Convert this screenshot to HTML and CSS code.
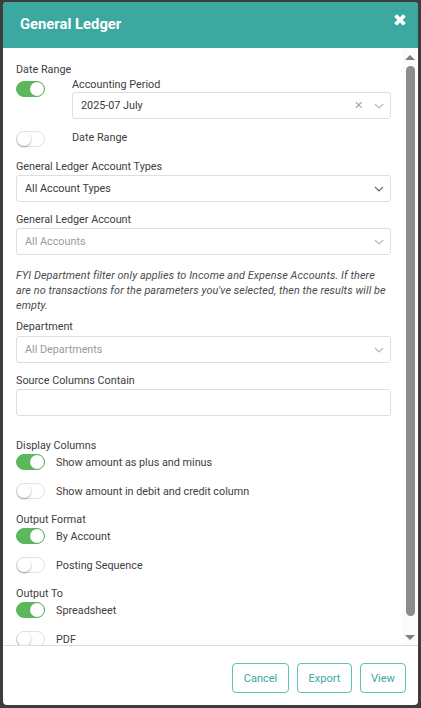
FILE: index.html
```html
<!DOCTYPE html>
<html>
<head>
<meta charset="utf-8">
<link rel="stylesheet" href="styles.css">
</head>
<body>
<div class="modal">
  <div class="header">
    <div class="title">General Ledger</div>
    <div class="close">&#x2715;</div>
  </div>
  <div class="main">
    <div class="content">
      <div class="label">Date Range</div>
      <div class="period-row">
        <span class="toggle on"></span>
        <div class="period-col">
          <div class="sublabel">Accounting Period</div>
          <div class="select">
            <span class="value">2025-07 July</span>
            <span class="clear">&#x2715;</span>
            <svg class="chev" viewBox="0 0 10 6" width="10" height="6"><path d="M1 1l4 4 4-4" fill="none" stroke="#b5b5b5" stroke-width="1.1"/></svg>
          </div>
        </div>
      </div>
      <div class="trow first"><span class="toggle"></span><span class="ttext">Date Range</span></div>

      <div class="label gap-a">General Ledger Account Types</div>
      <div class="select">
        <span class="value">All Account Types</span>
        <svg class="chev dark" viewBox="0 0 10 6" width="10" height="6"><path d="M1 1l4 4 4-4" fill="none" stroke="#666" stroke-width="1.1"/></svg>
      </div>

      <div class="label gap-b">General Ledger Account</div>
      <div class="select">
        <span class="value ph">All Accounts</span>
        <svg class="chev" viewBox="0 0 10 6" width="10" height="6"><path d="M1 1l4 4 4-4" fill="none" stroke="#b5b5b5" stroke-width="1.1"/></svg>
      </div>

      <p class="note">FYI Department filter only applies to Income and Expense Accounts. If there are no transactions for the parameters you've selected, then the results will be empty.</p>

      <div class="label gap-c">Department</div>
      <div class="select">
        <span class="value ph">All Departments</span>
        <svg class="chev" viewBox="0 0 10 6" width="10" height="6"><path d="M1 1l4 4 4-4" fill="none" stroke="#b5b5b5" stroke-width="1.1"/></svg>
      </div>

      <div class="label gap-b">Source Columns Contain</div>
      <div class="select input"></div>

      <div class="label gap-d">Display Columns</div>
      <div class="trow"><span class="toggle on"></span><span class="ttext">Show amount as plus and minus</span></div>
      <div class="trow next"><span class="toggle"></span><span class="ttext">Show amount in debit and credit column</span></div>

      <div class="label gap-e">Output Format</div>
      <div class="trow"><span class="toggle on"></span><span class="ttext">By Account</span></div>
      <div class="trow next"><span class="toggle"></span><span class="ttext">Posting Sequence</span></div>

      <div class="label gap-e">Output To</div>
      <div class="trow"><span class="toggle on"></span><span class="ttext">Spreadsheet</span></div>
      <div class="trow next"><span class="toggle"></span><span class="ttext">PDF</span></div>
    </div>
    <div class="scrollbar">
      <span class="arrow up"></span>
      <span class="thumb"></span>
      <span class="arrow down"></span>
    </div>
  </div>
  <div class="footer">
    <button class="btn cancel">Cancel</button>
    <button class="btn export">Export</button>
    <button class="btn view">View</button>
  </div>
</div>
</body>
</html>
```

FILE: styles.css
```css
* { box-sizing: border-box; }
html, body { margin: 0; padding: 0; }
body {
  background: #3d3d3d;
  width: 421px;
  height: 708px;
  overflow: hidden;
  font-family: Roboto, "Liberation Sans", sans-serif;
  font-size: 10.8px;
  color: #3f3f3f;
  padding: 2px 3px 3px 3px;
}
.modal {
  width: 415px;
  height: 703px;
  background: #fff;
  border-radius: 4px;
  overflow: hidden;
  display: flex;
  flex-direction: column;
}
.header {
  height: 46px;
  flex: none;
  background: #3ba99f;
  display: flex;
  align-items: center;
  justify-content: space-between;
  padding: 0 12px 2px 17px;
}
.title {
  font-family: Roboto, "Liberation Sans", sans-serif;
  font-weight: 700;
  font-size: 14.8px;
  color: #fff;
}
.close {
  color: #fff;
  font-weight: 900;
  font-size: 14px;
  margin-top: -8px;
  -webkit-text-stroke: 1.6px #fff;
}
.main {
  flex: none;
  height: 598px;
  display: flex;
  overflow: hidden;
  border-bottom: 1px solid #dcdcdc;
}
.content {
  flex: 1;
  padding: 13px 12px 0 13px;
  overflow: hidden;
}
.label {
  height: 16px;
  padding-top: 1px;
  line-height: 16px;
  color: #404040;
}
.sublabel {
  height: 15px;
  line-height: 16px;
  color: #404040;
}
.period-row {
  display: flex;
}
.period-row .toggle { margin-top: 4px; }
.period-col {
  flex: 1;
  margin-left: 27px;
}
.select {
  position: relative;
  height: 27px;
  border: 1px solid #dedede;
  border-radius: 3px;
  display: flex;
  align-items: center;
  padding-left: 8px;
  margin-top: 1px;
}
.select .value { flex: 1; color: #3a3a3a; }
.select .value.ph { color: #9a9a9a; }
.select .clear {
  color: #a5a5a5;
  font-size: 11px;
  margin-right: 11px;
}
.chev { margin-right: 6px; }
.period-col .select { margin-top: 0; }
.toggle {
  flex: none;
  position: relative;
  width: 29px;
  height: 16px;
  border-radius: 8px;
  background: #fff;
  border: 1px solid #e2e2e2;
}
.toggle::after {
  content: "";
  position: absolute;
  top: 0;
  left: 0;
  width: 14px;
  height: 14px;
  border-radius: 50%;
  background: #fff;
  box-shadow: 0 1px 2px rgba(0,0,0,0.35);
}
.toggle.on {
  background: #5cb85c;
  border-color: #5cb85c;
}
.toggle.on::after {
  left: 13px;
  box-shadow: 0 0 1px rgba(0,0,0,0.25);
}
.trow {
  display: flex;
  align-items: center;
  height: 16px;
  margin-top: 1px;
}
.trow .ttext { margin-left: 11px; color: #404040; }
.trow.first { margin-top: 12px; }
.trow.first .ttext { margin-left: 27px; margin-top: -4px; }
.trow.next { margin-top: 13px; }
.gap-a { margin-top: 11px; }
.gap-a + .select { margin-top: 1px; }
.gap-b { margin-top: 9px; }
.gap-b + .select { margin-top: 1px; }
.gap-c { margin-top: 5px; }
.gap-c + .select { margin-top: 2px; }
.gap-d { margin-top: 21px; }
.gap-e { margin-top: 12px; }
.note {
  margin: 13px 0 0 0;
  padding-right: 1px;
  font-style: italic;
  line-height: 15px;
  letter-spacing: 0.1px;
  color: #4a4a4a;
}
.scrollbar {
  flex: none;
  width: 14px;
  margin-right: 1px;
  background: #fbfbfb;
  display: flex;
  flex-direction: column;
  align-items: center;
  padding-top: 7px;
}
.arrow {
  width: 0;
  height: 0;
  border-left: 5px solid transparent;
  border-right: 5px solid transparent;
}
.arrow.up { border-bottom: 5px solid #7d7d7d; }
.arrow.down { border-top: 5px solid #7d7d7d; margin-top: 19px; }
.thumb {
  margin-top: 6px;
  width: 9px;
  height: 550px;
  border-radius: 5px;
  background: #8c8c8c;
}
.footer {
  flex: 1;
  display: flex;
  justify-content: flex-end;
  align-items: flex-start;
  gap: 8px;
  padding: 17px 12px 0 0;
}
.btn {
  height: 30px;
  background: #fff;
  border: 1.5px solid #5fc2b9;
  border-radius: 4px;
  color: #3ba99f;
  font-family: Roboto, "Liberation Sans", sans-serif;
  font-size: 11px;
  padding: 0;
}
.btn.cancel { width: 57px; }
.btn.export { width: 55px; }
.btn.view { width: 46px; }
```
